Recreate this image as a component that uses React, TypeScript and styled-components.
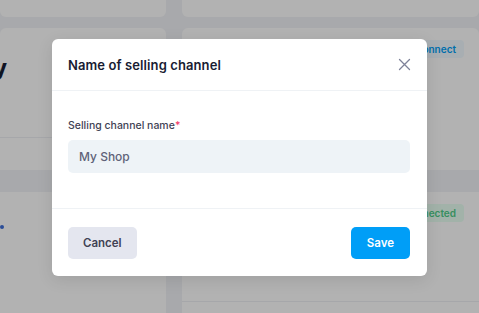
import styled, { createGlobalStyle } from 'styled-components';

const GlobalStyle = createGlobalStyle`
  html, body {
    margin: 0;
    padding: 0;
    width: 479px;
    height: 313px;
    overflow: hidden;
    background: #f1f3f6;
    font-family: Inter, "Noto Sans", "Liberation Sans", sans-serif;
  }
`;

const Page = styled.div`
  position: relative;
  width: 479px;
  height: 313px;
  display: grid;
  grid-template-columns: 166px 1fr;
  column-gap: 16px;
  overflow: hidden;
`;

const Column = styled.div`
  display: flex;
  flex-direction: column;
  margin-top: -20px;
  gap: 11px;
`;

const Card = styled.div<{ $height?: number }>`
  background: #ffffff;
  border-radius: 6px;
  height: ${(p) => (p.$height ? `${p.$height}px` : 'auto')};
  display: flex;
  flex-direction: column;
  overflow: hidden;
`;

const Section = styled.div<{ $height: number; $line?: boolean }>`
  height: ${(p) => p.$height}px;
  border-bottom: ${(p) => (p.$line ? '1px solid #eef0f4' : 'none')};
  display: flex;
  align-items: flex-start;
  box-sizing: border-box;
`;

const Band = styled.div`
  height: 22px;
  background: #f1f3f6;
`;

const BigTitle = styled.span`
  margin: 27px 0 0 -6px;
  font-size: 21px;
  font-weight: 800;
  color: #181c32;
`;

const Dot = styled.span`
  margin: 33px 0 0 0;
  width: 4px;
  height: 4px;
  border-radius: 50%;
  background: #3e6fd8;
`;

const Badge = styled.span<{ $tone: 'blue' | 'green' }>`
  margin: 12px 15px 0 auto;
  padding: 0 8px;
  height: 18px;
  line-height: 18px;
  border-radius: 4px;
  font-size: 10px;
  font-weight: 600;
  color: ${(p) => (p.$tone === 'blue' ? '#009ef7' : '#50cd89')};
  background: ${(p) => (p.$tone === 'blue' ? '#f1faff' : '#e8fff3')};
`;

const Overlay = styled.div`
  position: absolute;
  inset: 0;
  background: rgba(0, 0, 0, 0.3);
  display: flex;
  align-items: flex-start;
  justify-content: flex-start;
  padding: 39px 0 0 52px;
  box-sizing: border-box;
`;

const Modal = styled.div`
  width: 375px;
  background: #ffffff;
  border-radius: 6px;
  box-shadow: 0 4px 16px rgba(0, 0, 0, 0.1);
  display: flex;
  flex-direction: column;
`;

const Header = styled.div`
  height: 52px;
  padding: 0 16px;
  display: flex;
  align-items: center;
  justify-content: space-between;
  border-bottom: 1px solid #eff2f5;
  box-sizing: border-box;
`;

const Title = styled.h3`
  margin: 0;
  font-size: 13px;
  font-weight: 600;
  color: #181c32;
  letter-spacing: 0.1px;
`;

const Close = styled.button`
  border: none;
  background: none;
  padding: 0;
  width: 13px;
  height: 13px;
  display: flex;
  cursor: pointer;
`;

const Body = styled.div`
  padding: 28px 17px 35px 16px;
  border-bottom: 1px solid #eff2f5;
  display: flex;
  flex-direction: column;
  gap: 8px;
`;

const Label = styled.label`
  font-size: 10.5px;
  font-weight: 500;
  color: #3f4254;
`;

const Req = styled.span`
  color: #f1416c;
`;

const Input = styled.input`
  height: 33px;
  border: none;
  border-radius: 5px;
  background: #eef3f7;
  padding: 0 11px;
  font-family: inherit;
  font-size: 12px;
  font-weight: 500;
  color: #5e6278;
  outline: none;
`;

const Footer = styled.div`
  padding: 18px 17px 17px 16px;
  display: flex;
  justify-content: space-between;
`;

const Button = styled.button<{ $primary?: boolean }>`
  height: 32px;
  padding: 0 ${(p) => (p.$primary ? '16px' : '15px')};
  border: none;
  border-radius: 5px;
  font-family: inherit;
  font-size: 11.5px;
  font-weight: 600;
  background: ${(p) => (p.$primary ? '#009ef7' : '#e4e6ef')};
  color: ${(p) => (p.$primary ? '#ffffff' : '#3f4254')};
`;

export default function App() {
  return (
    <>
      <GlobalStyle />
      <Page>
        <Column>
          <Card $height={37} />
          <Card>
            <Section $height={110} $line>
              <BigTitle>y</BigTitle>
            </Section>
            <Section $height={32} />
            <Band />
            <Section $height={160}>
              <Dot />
            </Section>
          </Card>
        </Column>
        <Column>
          <Card $height={37} />
          <Card>
            <Section $height={142}>
              <Badge $tone="blue">Connect</Badge>
            </Section>
            <Band />
            <Section $height={110} $line>
              <Badge $tone="green">Connected</Badge>
            </Section>
            <Section $height={50} />
          </Card>
        </Column>
        <Overlay>
          <Modal>
            <Header>
              <Title>Name of selling channel</Title>
              <Close aria-label="Close">
                <svg width="13" height="13" viewBox="0 0 13 13">
                  <path d="M1.5 1.5 L11.5 11.5 M11.5 1.5 L1.5 11.5" stroke="#7e8299" strokeWidth="1.3" strokeLinecap="round" />
                </svg>
              </Close>
            </Header>
            <Body>
              <Label>
                Selling channel name<Req>*</Req>
              </Label>
              <Input defaultValue="My Shop" />
            </Body>
            <Footer>
              <Button>Cancel</Button>
              <Button $primary>Save</Button>
            </Footer>
          </Modal>
        </Overlay>
      </Page>
    </>
  );
}
